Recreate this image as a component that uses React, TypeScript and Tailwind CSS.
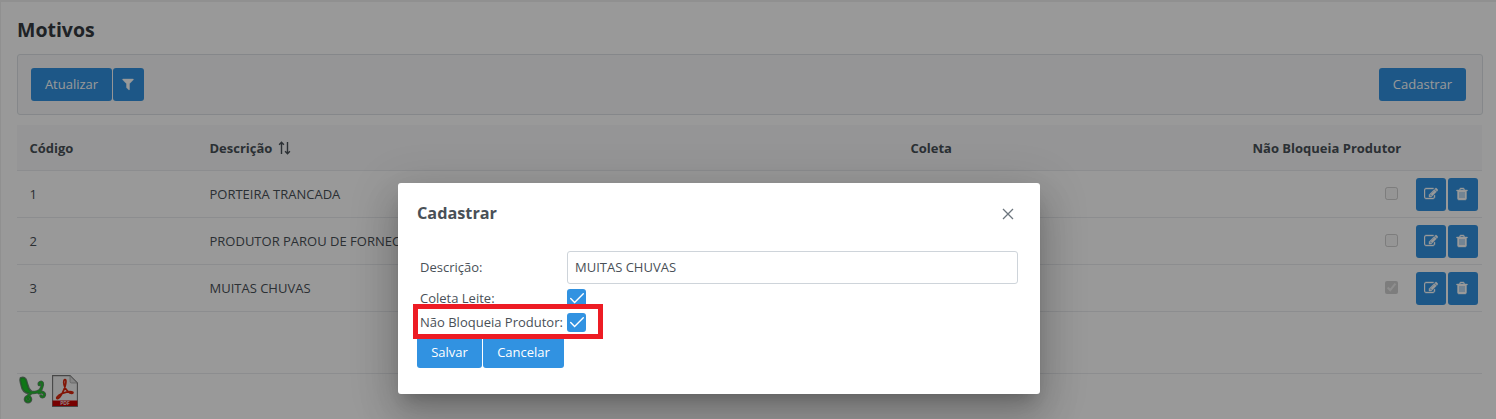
import React from "react";

const EDIT =
  "M888 1184l116-116-152-152-116 116v56h96v96h56zm440-720q-16-16-33 1l-350 350q-17 17-1 33t33-1l350-350q17-17 1-33zm80 594v190q0 119-84.5 203.5t-203.5 84.5h-832q-119 0-203.5-84.5t-84.5-203.5v-832q0-119 84.5-203.5t203.5-84.5h832q63 0 117 25 15 7 18 23 3 17-9 29l-49 49q-14 14-32 8-23-6-45-6h-832q-66 0-113 47t-47 113v832q0 66 47 113t113 47h832q66 0 113-47t47-113v-126q0-13 9-22l64-64q15-15 35-7t20 29zm-96-738l288 288-672 672h-288v-288zm444 132l-92 92-288-288 92-92q28-28 68-28t68 28l152 152q28 28 28 68t-28 68z";
const TRASH =
  "M704 1376v-704q0-14-9-23t-23-9h-64q-14 0-23 9t-9 23v704q0 14 9 23t23 9h64q14 0 23-9t9-23zm256 0v-704q0-14-9-23t-23-9h-64q-14 0-23 9t-9 23v704q0 14 9 23t23 9h64q14 0 23-9t9-23zm256 0v-704q0-14-9-23t-23-9h-64q-14 0-23 9t-9 23v704q0 14 9 23t23 9h64q14 0 23-9t9-23zm-544-992h448l-48-117q-7-9-17-11h-317q-10 2-17 11zm928 32v64q0 14-9 23t-23 9h-96v948q0 83-47 143.5t-113 60.5h-832q-66 0-113-58.5t-47-141.5v-952h-96q-14 0-23-9t-9-23v-64q0-14 9-23t23-9h309l70-167q15-37 54-63t79-26h320q40 0 79 26t54 63l70 167h309q14 0 23 9t9 23z";
const FILTER =
  "M1595 295q17 41-14 70l-493 493v742q0 42-39 59-13 5-25 5-27 0-45-19l-256-256q-19-19-19-45v-486l-493-493q-31-29-14-70 17-39 59-39h1280q42 0 59 39z";

function Glyph({ d, className }: { d: string; className: string }) {
  return (
    <svg viewBox="0 0 1792 1792" className={`size-[14px] fill-current stroke-current ${className}`} strokeWidth="50">
      <path d={d} />
    </svg>
  );
}

function Button({ children, className }: { children: React.ReactNode; className: string }) {
  return (
    <button
      className={`flex h-[33px] shrink-0 items-center justify-center rounded-[3px] bg-[#3192e1] text-[13px] text-white ${className}`}
    >
      {children}
    </button>
  );
}

function SortIcon() {
  return (
    <svg viewBox="0 0 14 14" className="mb-px size-[14px]" fill="none" stroke="currentColor" strokeWidth="1.4">
      <path d="M4.500 13V1.500M2.100 3.700L4.500 1.300L6.900 3.700M10.500 1v11.500M8.100 10.300L10.500 12.700L12.900 10.300" />
    </svg>
  );
}

function CheckedBox() {
  return (
    <span className="flex size-[19px] items-center justify-center rounded-[3px] bg-[#3192e1]">
      <svg viewBox="0 0 19 19" className="size-[19px]" fill="none" stroke="#fff" strokeWidth="1.4">
        <path d="M3.7 9.6L7.6 13.6L16.3 4.8" strokeLinecap="round" />
      </svg>
    </span>
  );
}

function SheetIcon() {
  const leaf = "M4 3.500C8 2 9 5 9.800 9C10.600 13 12 15.500 14.500 17.500C8 18.500 5.500 14.500 4.800 10C4.400 7.500 3 5.500 4 3.500Z";
  const stems = "M13.500 17.300C18 18 23.500 16.500 24.200 13.500C25 11.500 26 10 25.300 8.200C24.300 6.500 21.800 7.500 22.300 9.500M22 17.800C25.500 16.200 28 18 27.300 20.500C26.700 22.300 24.500 22.200 24 20.900M14 18C12 19.500 11 21 10.500 22";
  return (
    <svg viewBox="0 0 32 32" className="h-8 w-[32px]" fill="none" strokeLinecap="round" strokeLinejoin="round">
      <g stroke="#6d8773">
        <path d={leaf} strokeWidth="3" />
        <path d={stems} strokeWidth="3.400" />
        <circle cx="11" cy="24.300" r="3.300" strokeWidth="2" />
      </g>
      <path d={leaf} fill="#19c526" stroke="#20a52c" strokeWidth=".8" />
      <path d={stems} stroke="#25bd32" strokeWidth="1.900" />
      <circle cx="11" cy="24.300" r="3.200" fill="#20b62b" />
      <path d="M9.500 23.800a1.600 1.600 0 1 0 2.400-1" stroke="#6a9472" strokeWidth=".8" />
    </svg>
  );
}

function PdfIcon() {
  return (
    <svg viewBox="0 0 26 32" className="h-8 w-[26px]">
      <path d="M.6.6H18L25.400 8V31.400H.6Z" fill="#f4f4f4" stroke="#777" strokeWidth="1.1" />
      <path d="M18 .8L25.200 8H19.500Q18 8 18 6.500Z" fill="#ddd" stroke="#999" strokeWidth=".7" />
      <path
        d="M12.800 4.600C14.700 4.200 13.800 8.700 13.200 11C12 15.500 8.500 22.600 5.700 23.700C3.500 24 5 20.600 10 18.500C14.200 16.900 19.300 16.200 20.800 17.300C21.700 18.700 18.500 19 16.200 16.700C13.500 14.200 11.800 9.800 11.700 7.200C11.700 5.500 12.100 4.800 12.800 4.600Z"
        fill="none"
        stroke="#d9260c"
        strokeWidth="1.7"
      />
      <path d="M.6 25.500H25.400V31H.6Z" fill="#c80000" />
      <text x="13" y="30" textAnchor="middle" fontSize="5" fontWeight="600" fill="#fff" fontFamily="Open Sans">
        PDF
      </text>
    </svg>
  );
}

const rows = [
  { code: 1, text: "PORTEIRA TRANCADA", checked: false },
  { code: 2, text: "PRODUTOR PAROU DE FORNECER", checked: false },
  { code: 3, text: "MUITAS CHUVAS", checked: true },
];

export default function App() {
  return (
    <div className="relative h-[419px] w-[1496px] overflow-hidden bg-[#f0f0f0] pt-[2px] pl-px font-['Open_Sans',sans-serif] text-[13px] text-[#495057]">
      <main className="flex h-full flex-col bg-white pr-[13px] pl-4">
        <h1 className="mt-3 h-[40px] text-[19.5px] leading-[32px] font-bold text-[#343a40]">Motivos</h1>
        <section className="flex h-[61px] items-center justify-between rounded-[3px] border border-[#dee2e6] bg-[#f8f9fa] px-[13px] pr-4">
          <div className="flex gap-px">
            <Button className="w-[81px]">Atualizar</Button>
            <Button className="w-[31px]">
              <Glyph d={FILTER} className="mr-[2px] mb-px" />
            </Button>
          </div>
          <Button className="w-[87px]">Cadastrar</Button>
        </section>

        <section className="mt-[10px] w-[1465px]">
          <div className="flex h-[46px] items-center border-b border-[#e9ecef] bg-[#f8f9fa] pt-[2px] pl-[12.500px] font-bold">
            <span className="w-[180px]">Código</span>
            <span className="flex w-[701px] items-center gap-[5px]">
              Descrição <SortIcon />
            </span>
            <span className="w-[342px]">Coleta</span>
            <span>Não Bloqueia Produtor</span>
          </div>
          {rows.map((row) => (
            <div key={row.code} className="flex h-[47px] items-center border-b border-[#e9ecef] pr-1 pl-[12.500px]">
              <span className="w-[180px] pt-[2px]">{row.code}</span>
              <span className="grow pt-[2px]">{row.text}</span>
              <input type="checkbox" disabled defaultChecked={row.checked} className="mr-[18px] mb-[2px] size-[13px]" />
              <div className="flex gap-[2px]">
                <Button className="w-[30px]">
                  <Glyph d={EDIT} className="mb-px" />
                </Button>
                <Button className="w-[30px]">
                  <Glyph d={TRASH} className="mr-[2px]" />
                </Button>
              </div>
            </div>
          ))}
          <div className="h-[62px] border-b border-[#e9ecef]" />
        </section>
        <footer className="flex gap-[3px] pt-px">
          <SheetIcon />
          <PdfIcon />
        </footer>
      </main>

      <div className="absolute inset-0 bg-black/40" />

      <div
        role="dialog"
        className="absolute top-[183px] left-[398px] h-[211px] w-[642px] rounded-[3px] bg-white px-[19px] shadow-[0_11px_15px_-7px_rgba(0,0,0,0.2),0_24px_38px_3px_rgba(0,0,0,0.14),0_9px_46px_8px_rgba(0,0,0,0.12)]"
      >
        <header className="flex h-[68px] items-center justify-between pb-[7px]">
          <h2 className="text-[16.25px] font-bold">Cadastrar</h2>
          <svg viewBox="0 0 12 12" className="mr-[7px] size-3 text-[#6c757d]" fill="none" stroke="currentColor" strokeWidth="1.3">
            <path d="M1 1L11 11M11 1L1 11" />
          </svg>
        </header>
        <div className="flex h-[33px] items-center pl-[3px]">
          <label className="w-[147px]">Descrição:</label>
          <input
            className="h-[33px] w-[451px] rounded-[3px] border border-[#ced4da] px-[7px] pb-[2px] text-[13px]"
            defaultValue="MUITAS CHUVAS"
          />
        </div>
        <div className="mt-[5px] flex h-[19px] items-center pl-[3px]">
          <label className="w-[147px]">Coleta Leite:</label>
          <CheckedBox />
        </div>
        <div className="mt-[5px] flex h-[19px] items-center pl-[3px]">
          <label className="w-[147px] whitespace-nowrap">Não Bloqueia Produtor:</label>
          <CheckedBox />
        </div>
        <div className="mt-[3px] flex gap-px">
          <Button className="w-[65px] pt-[2px]">Salvar</Button>
          <Button className="w-[81px] pt-[2px]">Cancelar</Button>
        </div>
        <div className="absolute top-[121px] left-[15px] h-[35px] w-[190px] border-[5px] border-[#ed1c24]" />
      </div>
    </div>
  );
}
